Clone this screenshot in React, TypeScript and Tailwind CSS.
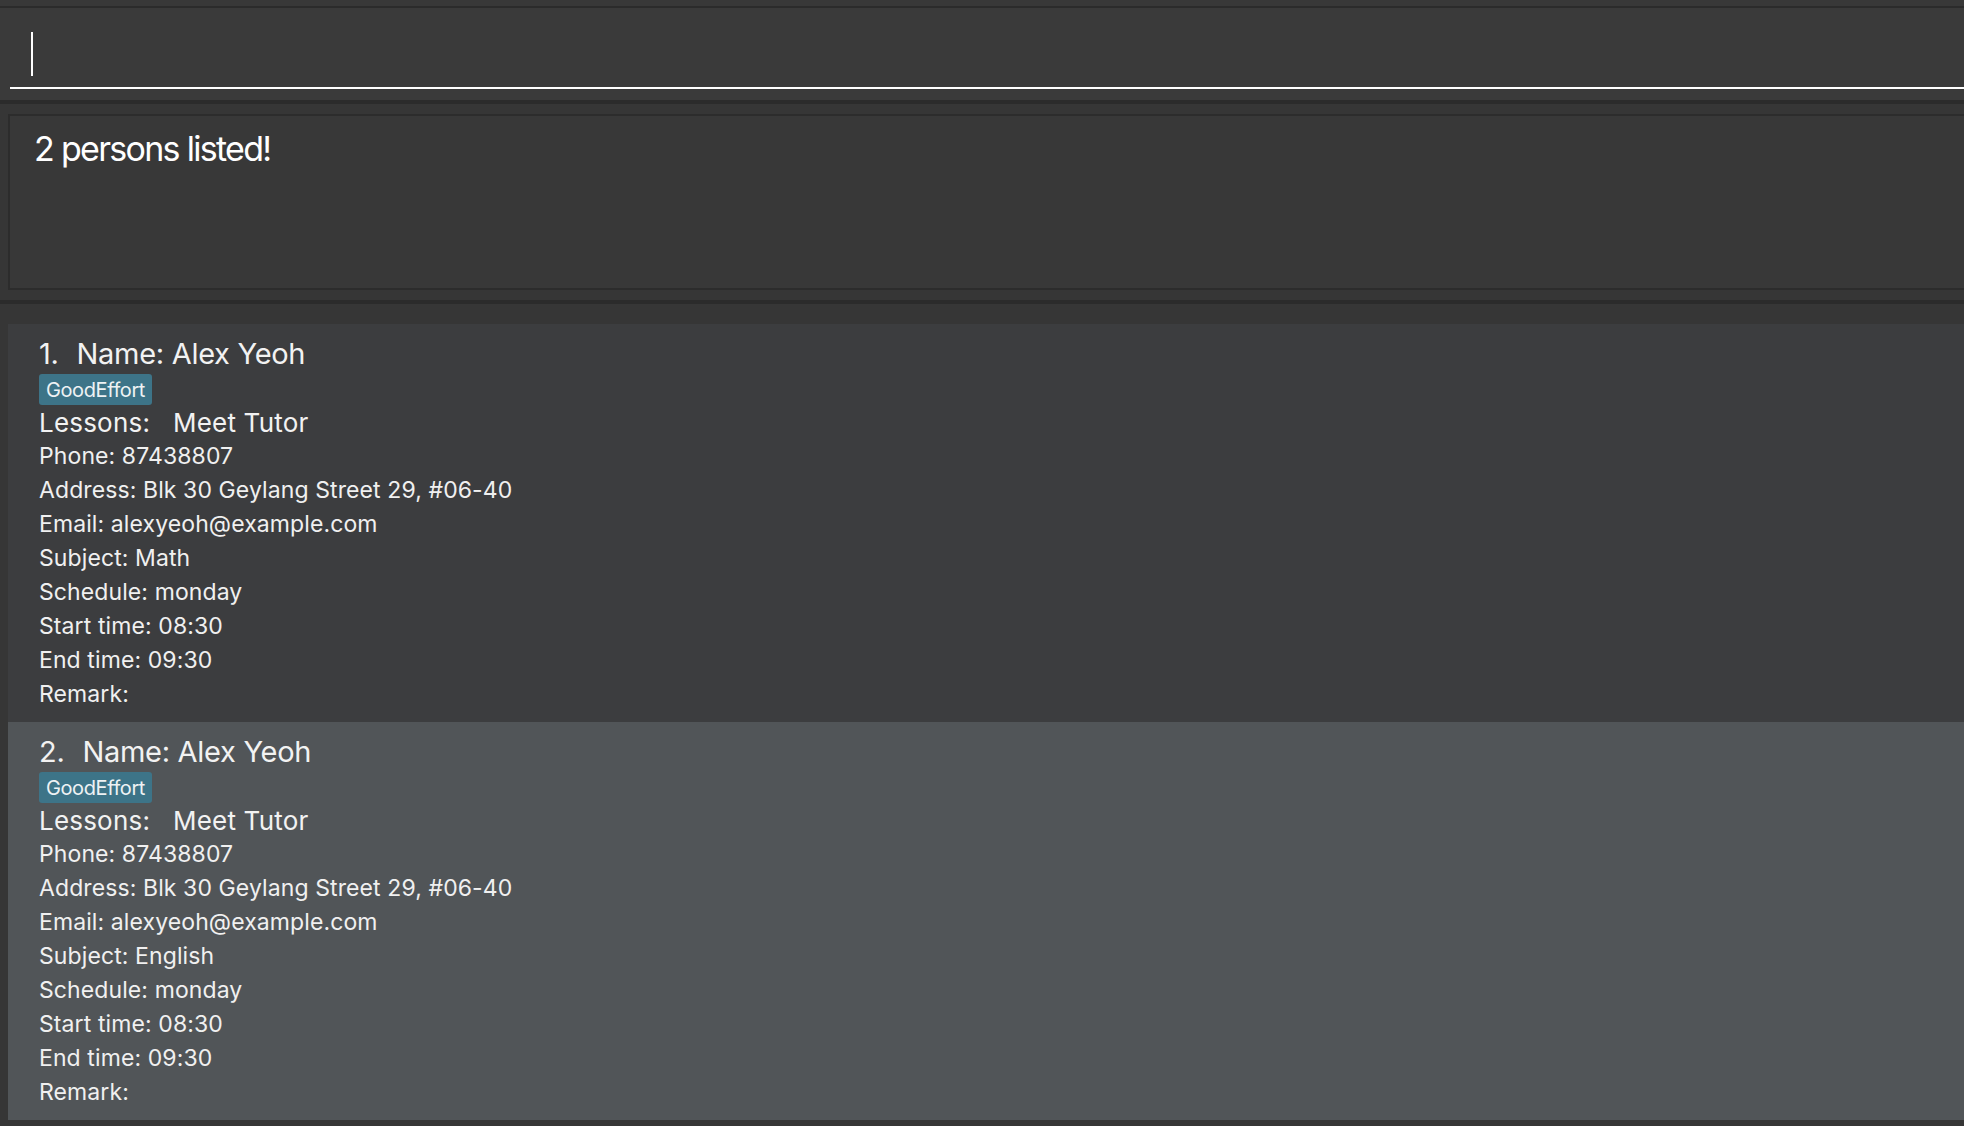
import React from 'react';

interface Person {
  index: number;
  name: string;
  tag: string;
  lesson: string;
  phone: string;
  address: string;
  email: string;
  subject: string;
  schedule: string;
  start: string;
  end: string;
  remark: string;
}

const persons: Person[] = [
  {
    index: 1,
    name: 'Alex Yeoh',
    tag: 'GoodEffort',
    lesson: 'Meet Tutor',
    phone: '87438807',
    address: 'Blk 30 Geylang Street 29, #06-40',
    email: 'alexyeoh@example.com',
    subject: 'Math',
    schedule: 'monday',
    start: '08:30',
    end: '09:30',
    remark: '',
  },
  {
    index: 2,
    name: 'Alex Yeoh',
    tag: 'GoodEffort',
    lesson: 'Meet Tutor',
    phone: '87438807',
    address: 'Blk 30 Geylang Street 29, #06-40',
    email: 'alexyeoh@example.com',
    subject: 'English',
    schedule: 'monday',
    start: '08:30',
    end: '09:30',
    remark: '',
  },
];

const PersonCard: React.FC<{ person: Person; odd: boolean }> = ({ person, odd }) => {
  const details = [
    `Phone: ${person.phone}`,
    `Address: ${person.address}`,
    `Email: ${person.email}`,
    `Subject: ${person.subject}`,
    `Schedule: ${person.schedule}`,
    `Start time: ${person.start}`,
    `End time: ${person.end}`,
    `Remark: ${person.remark}`,
  ];

  return (
    <div
      className={`h-[398px] pl-[31px] pt-[10px] ${odd ? 'bg-[#3c3d3f]' : 'bg-[#515558]'}`}
    >
      <div className="flex h-[40px] items-center text-[29px] tracking-[-0.3px] text-[#f2f2f2]">
        <span className="mr-[18px]">{person.index}.</span>
        <span>Name: {person.name}</span>
      </div>
      <div className="flex">
        <span className="flex h-[31px] items-center rounded-[3px] bg-[#3d7488] px-[7px] text-[20px] tracking-[-0.4px] text-[#eef2f4]">
          {person.tag}
        </span>
      </div>
      <div className="flex h-[34px] items-center text-[26px] tracking-[0.2px] text-[#f2f2f2]">
        <span className="w-[134px]">Lessons:</span>
        <span>{person.lesson}</span>
      </div>
      {details.map((d) => (
        <div
          key={d}
          className="flex h-[34px] items-center text-[23px] tracking-[0.1px] text-[#f0f0f0]"
        >
          {d}
        </div>
      ))}
    </div>
  );
};

export default function App() {
  return (
    <div
      className="flex h-[1126px] w-full flex-col overflow-hidden bg-[#383838]"
      style={{ fontFamily: 'Inter, "Noto Sans", sans-serif' }}
    >
      {/* command box */}
      <div className="h-[6px] bg-[#383838]" />
      <div className="h-[2px] bg-[#2b2b2b]" />
      <div className="h-[92px] bg-[#3a3a3a] pl-[10px]">
        <div className="flex h-[81px] items-start border-b-2 border-white pl-[21px] pt-[24px]">
          <div className="h-[44px] w-[2px] bg-white" />
        </div>
      </div>
      <div className="h-[4px] bg-[#2b2b2b]" />

      {/* result display */}
      <div className="h-[196px] bg-[#363636] pl-[8px] pt-[10px]">
        <div className="h-[176px] border-2 border-r-0 border-[#2c2c2c] bg-[#383838] pl-[24px] pt-[7px]">
          <p className="text-[34px] tracking-[-1.7px] text-white">2 persons listed!</p>
        </div>
      </div>
      <div className="h-[4px] bg-[#2b2b2b]" />

      {/* person list */}
      <div className="flex-1 bg-[#363636] pl-[8px] pt-[20px]">
        {persons.map((p, i) => (
          <PersonCard key={p.index} person={p} odd={i % 2 === 0} />
        ))}
      </div>
    </div>
  );
}
